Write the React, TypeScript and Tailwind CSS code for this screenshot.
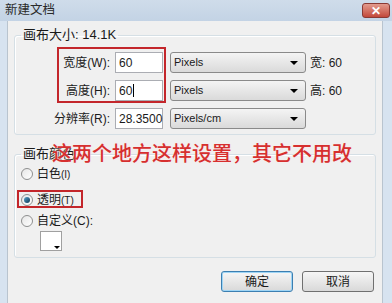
import React from "react";

const FONT = { fontFamily: '"Liberation Sans", "Noto Sans CJK SC", sans-serif' };

function Radio({ checked }: { checked?: boolean }) {
  return (
    <span className="flex h-[12px] w-[12px] items-center justify-center rounded-full border border-[#8e8f8f] bg-gradient-to-br from-[#e6e6e6] to-[#ffffff]">
      {checked && (
        <span className="h-[6px] w-[6px] rounded-full bg-gradient-to-br from-[#5aa3c9] to-[#0d3a5a]" />
      )}
    </span>
  );
}

function Select({ value }: { value: string }) {
  return (
    <div className="flex h-[21px] w-[136px] items-center justify-between rounded-[3px] border border-[#8a8a8a] bg-gradient-to-b from-[#f4f4f4] to-[#dadada] pl-[3px] pr-[7px] text-[11px] text-[#1a1a1a]">
      <span>{value}</span>
      <span className="h-0 w-0 border-x-[4px] border-t-[4px] border-x-transparent border-t-black" />
    </div>
  );
}

function Row({ label, value, unit, extra, caret }: { label: string; value: string; unit: string; extra?: string; caret?: boolean }) {
  return (
    <div className="flex h-[21px] items-center">
      <span className="w-[95px] text-right text-[12px] text-[#1a1a1a]">{label}</span>
      <div className="ml-[5px] flex h-[21px] w-[48px] items-center border border-[#abadb3] bg-white pl-[3px] text-[12px] text-[#1a1a1a]">
        {value}
        {caret && <span className="ml-[1px] h-[13px] w-[1px] bg-black" />}
      </div>
      <div className="ml-[7px]">
        <Select value={unit} />
      </div>
      {extra && <span className="ml-[4px] text-[12px] text-[#1a1a1a]">{extra}</span>}
    </div>
  );
}

function Button({ label, focused }: { label: string; focused?: boolean }) {
  return (
    <button
      className={`flex h-[21px] w-[72px] items-center justify-center rounded-[3px] border bg-gradient-to-b from-[#f6f6f6] to-[#d9d9d9] text-[12px] text-[#1a1a1a] ${
        focused ? "border-[#3c7fb1] shadow-[inset_0_0_0_1px_#9fd5f5]" : "border-[#707070]"
      }`}
    >
      {label}
    </button>
  );
}

export default function App() {
  return (
    <div className="relative flex h-[303px] w-[392px] flex-col overflow-hidden bg-[#d7e3f0]" style={FONT}>
      {/* title bar */}
      <div className="flex h-[21px] items-center justify-between bg-gradient-to-b from-[#cfdcea] to-[#c3d3e5] pl-[5px] pr-[2px]">
        <span className="text-[12.5px] text-[#2a2a2a]">新建文档</span>
        <div className="flex h-[15px] w-[28px] items-center justify-center rounded-[3px] border border-[#8a3a34] bg-gradient-to-b from-[#e29b8e] to-[#c2473a]">
          <span className="text-[12px] font-bold leading-none text-white">✕</span>
        </div>
      </div>

      {/* client area */}
      <div className="ml-[7px] mr-[9px] flex flex-1 flex-col border-x border-[#b9c4cf] bg-[#f0f0f0] pt-[7px]">
        <fieldset className="ml-[6px] mr-[6px] rounded-[3px] border border-[#d5dfe5] pb-[5px] shadow-[inset_1px_1px_0_#ffffff]">
          <legend className="ml-[6px] px-[2px] text-[13px] leading-[14px] text-[#1a1a1a]">画布大小: 14.1K</legend>
          <div className="flex flex-col gap-[7px] pt-[10px]">
            <Row label="宽度(W):" value="60" unit="Pixels" extra="宽: 60" />
            <Row label="高度(H):" value="60" unit="Pixels" extra="高: 60" caret />
            <Row label="分辨率(R):" value="28.3500" unit="Pixels/cm" />
          </div>
        </fieldset>

        <fieldset className="ml-[6px] mr-[6px] mt-[12px] rounded-[3px] border border-[#d5dfe5] pb-[6px] shadow-[inset_1px_1px_0_#ffffff]">
          <legend className="ml-[6px] px-[2px] text-[13px] leading-[14px] text-[#1a1a1a]">画布颜色</legend>
          <div className="flex flex-col pl-[6px] pt-[4px] text-[12px] text-[#1a1a1a]">
            <label className="flex h-[18px] items-center gap-[4px]">
              <Radio />
              <span>白色<span className="text-[10px]">(I)</span></span>
            </label>
            <label className="mt-[8px] flex h-[18px] items-center gap-[4px]">
              <Radio checked />
              <span>透明<span className="text-[10px]">(T)</span></span>
            </label>
            <label className="mt-[3px] flex h-[18px] items-center gap-[4px]">
              <Radio />
              <span>自定义(C):</span>
            </label>
            <div className="relative ml-[19px] mt-[1px] h-[20px] w-[22px] border border-[#a0a0a0] bg-white">
              <span className="absolute bottom-[1px] right-[1px] h-0 w-0 border-x-[3px] border-t-[3px] border-x-transparent border-t-black" />
            </div>
          </div>
        </fieldset>

        <div className="mr-[8px] mt-[13px] flex justify-end gap-[9px]">
          <Button label="确定" focused />
          <Button label="取消" />
        </div>
      </div>

      {/* annotations drawn over the screenshot */}
      <div className="pointer-events-none absolute left-[57px] top-[47px] h-[56px] w-[109px] border-2 border-[#c3262b]" />
      <div className="pointer-events-none absolute left-[17px] top-[190px] h-[18px] w-[66px] border-2 border-[#c3262b]" />
      <div
        className="pointer-events-none absolute left-[52px] top-[141px] whitespace-nowrap text-[20px] font-medium leading-[24px] text-[#d62f2f] [text-shadow:0_0_2px_#fde5e5]"
        style={{ fontFamily: '"Noto Sans CJK SC", sans-serif' }}
      >
        这两个地方这样设置，其它不用改
      </div>
    </div>
  );
}
